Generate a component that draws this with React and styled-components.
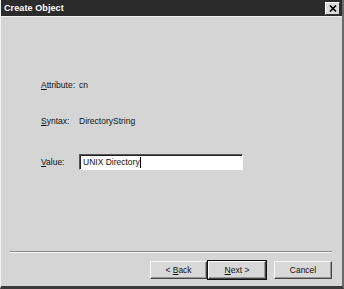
import React from 'react';
import styled, { createGlobalStyle } from 'styled-components';

const Global = createGlobalStyle`
  html, body { margin: 0; padding: 0; background: #d5d5d5; }
  body { font-family: "Liberation Sans", Arial, sans-serif; }
`;

const Window = styled.div`
  width: 344px;
  height: 289px;
  box-sizing: border-box;
  background: #d5d5d5;
  border-left: 1px solid #f2f2f2;
  border-right: 2px solid #6a6a6a;
  border-bottom: 3px solid #3a3a3a;
  display: flex;
  flex-direction: column;
  overflow: hidden;
`;

const TitleBar = styled.div`
  height: 16px;
  background: #2b2b2b;
  border-bottom: 1px solid #efefef;
  display: flex;
  align-items: center;
  justify-content: space-between;
  padding: 0 2px 0 3px;
  color: #fff;
  font-weight: bold;
  font-size: 9px;
  letter-spacing: 0.1px;
`;

const CloseBox = styled.div`
  width: 13px;
  height: 11px;
  background: #dcdcdc;
  border: 1px solid;
  border-color: #fff #333 #333 #fff;
  display: flex;
  align-items: center;
  justify-content: center;
`;

const Body = styled.div`
  flex: 1;
  display: flex;
  flex-direction: column;
  padding: 0 10px 0 9px;
`;

const Fields = styled.div`
  flex: 1;
  display: flex;
  flex-direction: column;
  padding: 60px 0 0 31px;
  font-size: 8.5px;
  color: #111;
`;

const Row = styled.div`
  display: flex;
  align-items: center;
  height: 16px;
  margin-bottom: ${p => p.gap}px;
`;

const Label = styled.span`
  width: 38px;
  flex: none;
`;

const Value = styled.span`
  margin-left: ${p => p.shift || 0}px;
`;

const TextBox = styled.div`
  width: 164px;
  height: 16px;
  box-sizing: border-box;
  background: #fff;
  border: 1px solid;
  border-color: #555 #fff #fff #555;
  box-shadow: inset 1px 1px 0 #222;
  display: flex;
  align-items: center;
  padding-left: 3px;
  font-size: 8.5px;
  color: #111;
`;

const Caret = styled.span`
  display: inline-block;
  width: 1px;
  height: 11px;
  background: #000;
`;

const Separator = styled.div`
  height: 0;
  border-top: 1px solid #8a8a8a;
  border-bottom: 1px solid #fafafa;
`;

const Buttons = styled.div`
  display: flex;
  justify-content: flex-end;
  padding: 8px 0 7px;
`;

const Button = styled.button`
  width: ${p => p.w}px;
  height: 18px;
  margin-left: ${p => p.ml}px;
  box-sizing: border-box;
  background: #d8d8d8;
  border: 1px solid;
  border-color: #fafafa #444 #444 #fafafa;
  box-shadow: inset -1px -1px 0 #999;
  outline: ${p => (p.primary ? '1px solid #111' : 'none')};
  outline-offset: 0;
  font-family: "Liberation Sans", Arial, sans-serif;
  font-size: 8.5px;
  color: #111;
  padding: 0;
  u { text-decoration: underline; }
`;

export default function App() {
  return (
    <>
      <Global />
      <Window>
        <TitleBar>
          <span>Create Object</span>
          <CloseBox>
            <svg width="8" height="7" viewBox="0 0 8 7">
              <path d="M1 0.5 L7 6.5 M7 0.5 L1 6.5" stroke="#000" strokeWidth="1.6" />
            </svg>
          </CloseBox>
        </TitleBar>
        <Body>
          <Fields>
            <Row gap={20}>
              <span><u>A</u>ttribute:</span>
              <Value shift={4}>cn</Value>
            </Row>
            <Row gap={25}>
              <Label><u>S</u>yntax:</Label>
              <Value>DirectoryString</Value>
            </Row>
            <Row gap={0}>
              <Label><u>V</u>alue:</Label>
              <TextBox>UNIX Directory<Caret /></TextBox>
            </Row>
          </Fields>
          <Separator />
          <Buttons>
            <Button w={57} ml={0}>&lt; <u>B</u>ack</Button>
            <Button w={58} ml={1} primary><u>N</u>ext &gt;</Button>
            <Button w={58} ml={8}>Cancel</Button>
          </Buttons>
        </Body>
      </Window>
    </>
  );
}
